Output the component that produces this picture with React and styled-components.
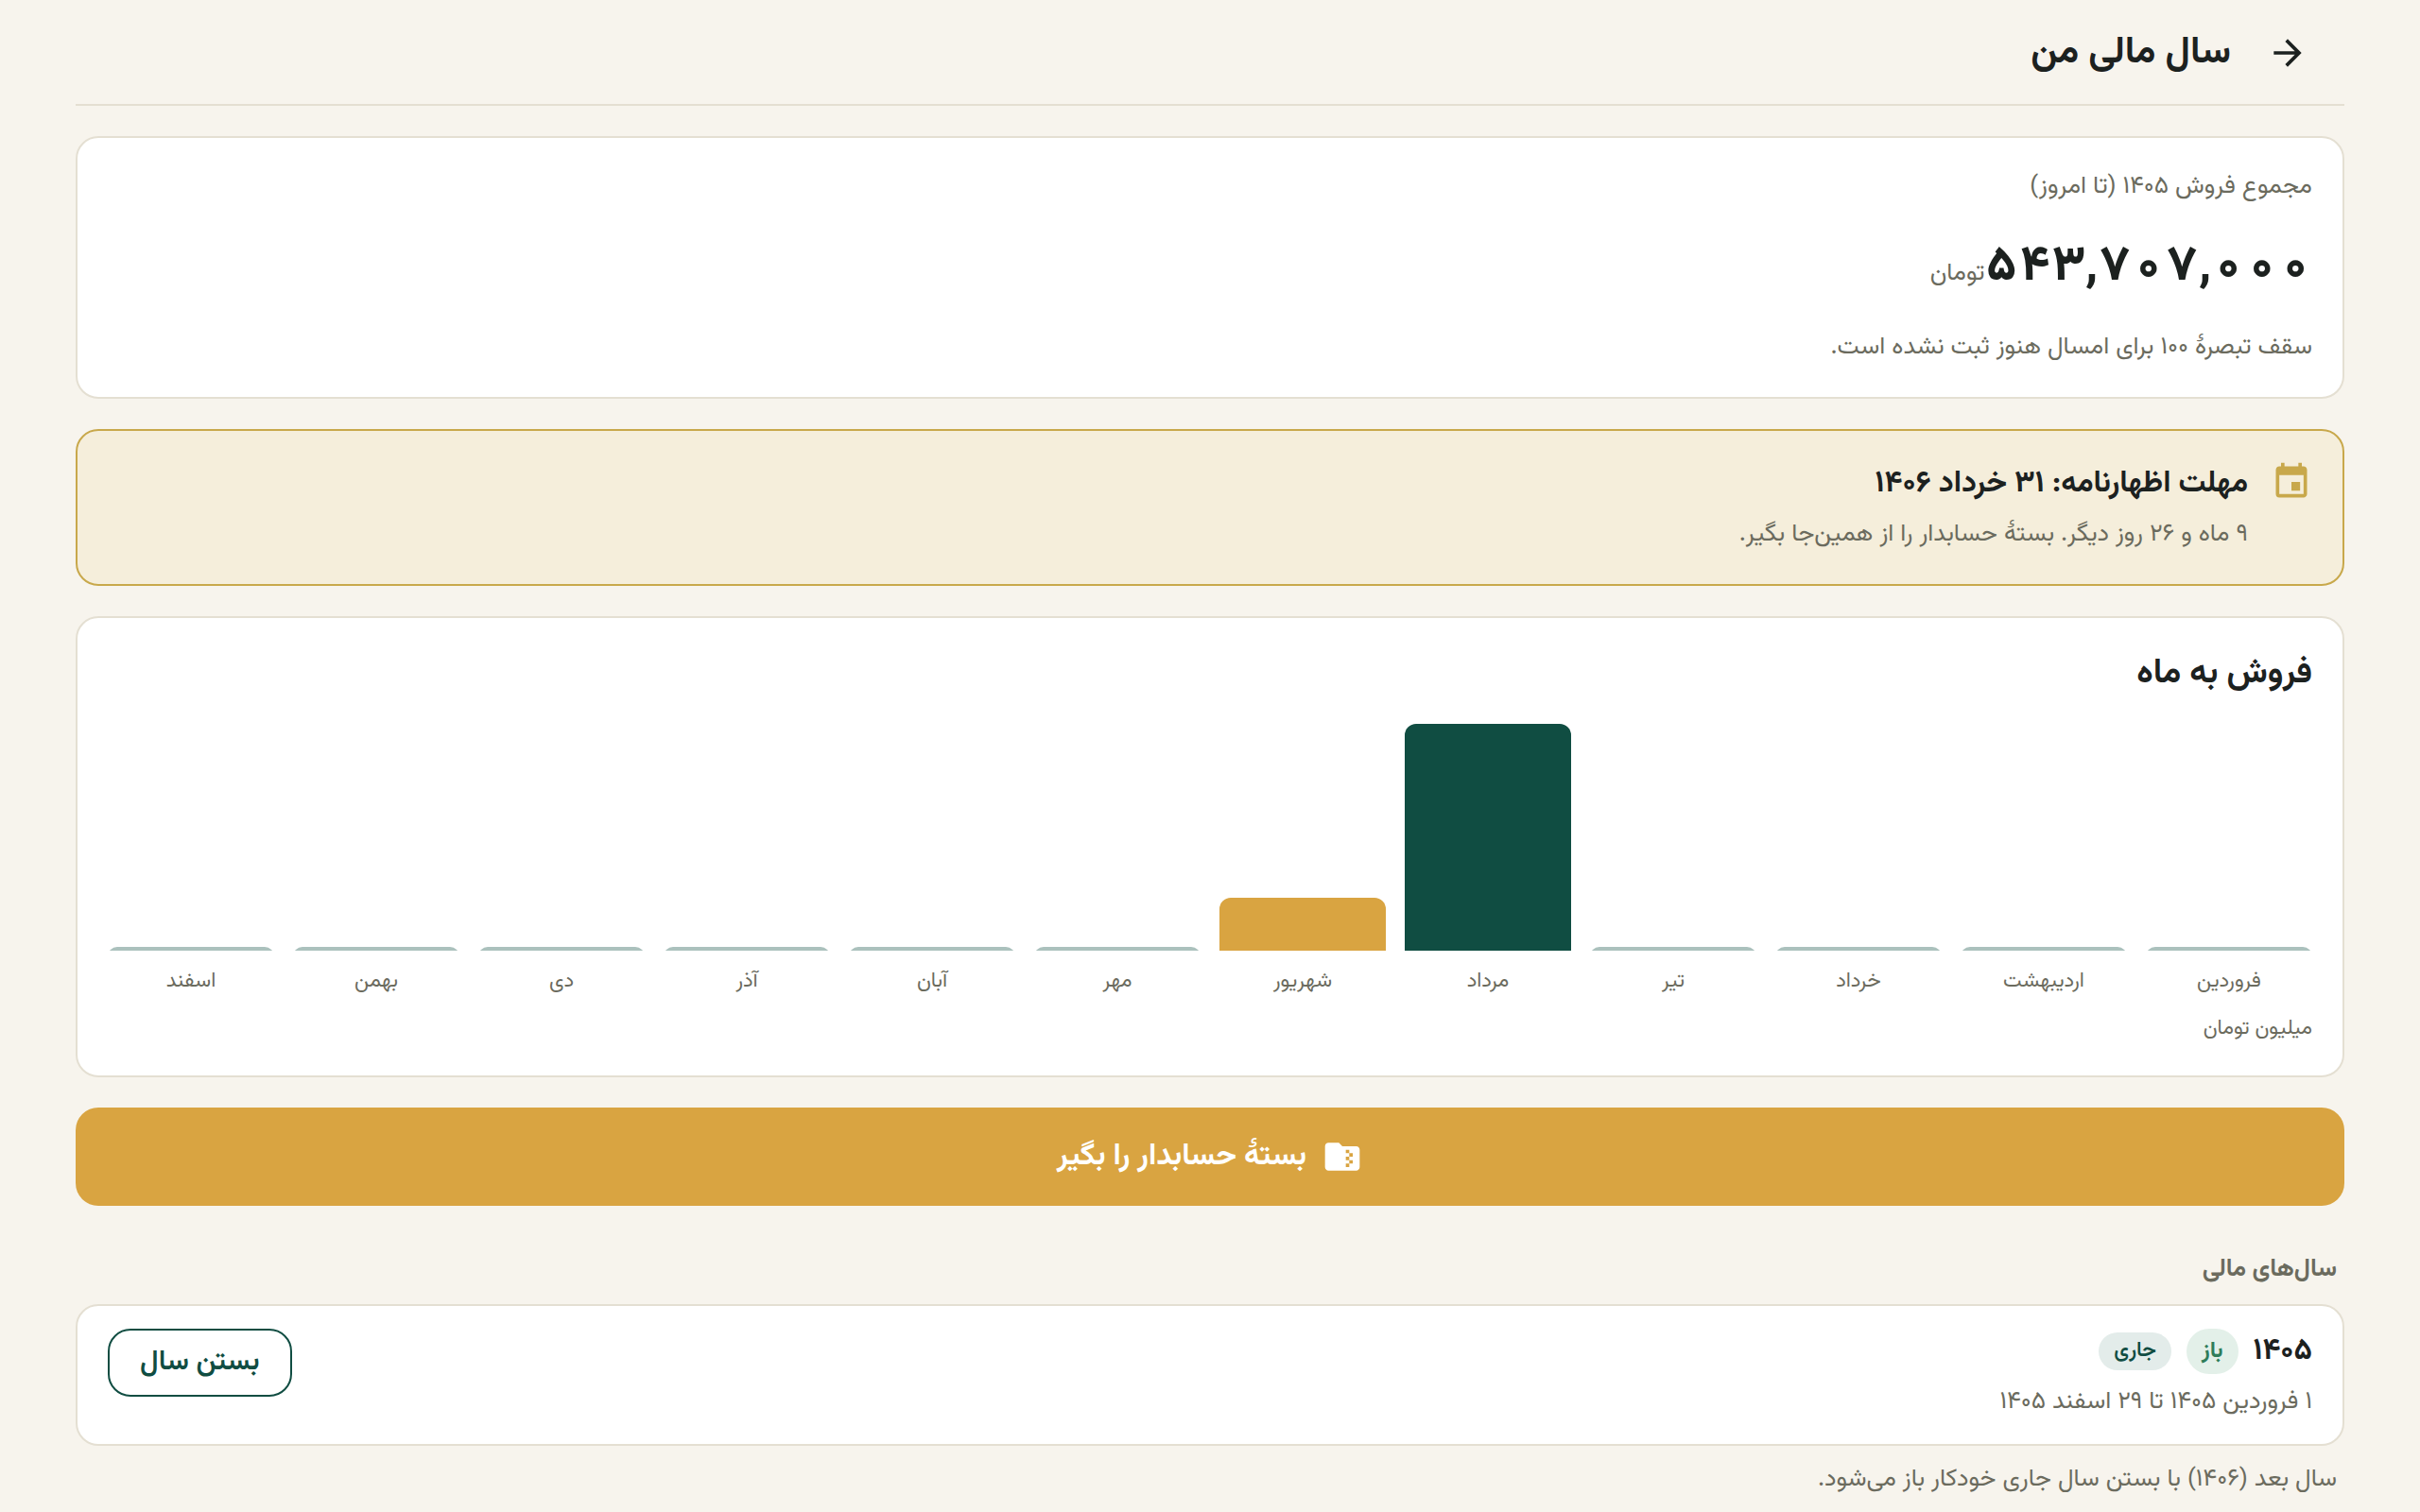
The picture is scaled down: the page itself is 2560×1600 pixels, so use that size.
import React from "react";
import styled, { createGlobalStyle } from "styled-components";
import { MdArrowForward, MdEvent, MdFolderZip } from "react-icons/md";

const GlobalStyle = createGlobalStyle`
  * {
    box-sizing: border-box;
  }

  body {
    margin: 0;
    background-color: #f7f4ed;
    color: #1c211f;
    font-family: "Vazirmatn", "Noto Sans", sans-serif;
    font-size: 26px;
    line-height: 40px;
  }

  h1, h2, h3, p, ul {
    margin: 0;
    padding: 0;
  }

  button {
    font-family: inherit;
    cursor: pointer;
  }
`;

const Page = styled.div`
  padding: 0 80px;
`;

const Header = styled.header`
  display: flex;
  align-items: center;
  gap: 16px;
  height: 112px;
  padding: 2px 16px 0;
  border-bottom: 2px solid #e4dfd2;

  h1 {
    font-size: 40px;
    line-height: 62px;
    font-weight: 700;
  }
`;

const BackButton = styled.button`
  display: flex;
  align-items: center;
  justify-content: center;
  width: 88px;
  height: 88px;
  padding: 0;
  border: none;
  background: none;
  color: inherit;
  font-size: 44px;
`;

const Main = styled.main`
  display: flex;
  flex-direction: column;
  gap: 32px;
  padding: 32px 0;
`;

const Card = styled.section`
  padding: 32px;
  background-color: #fff;
  border: 2px solid #e4dfd2;
  border-radius: 24px;
`;

const Muted = styled.p`
  color: #6b6b5e;
`;

const Total = styled.div`
  display: flex;
  align-items: baseline;
  margin: 24px 0 22px;

  strong {
    font-size: 52px;
    line-height: 84px;
    font-weight: 800;
    font-variant-numeric: tabular-nums;
  }

  span {
    color: #6b6b5e;
  }
`;

const DeadlineCard = styled(Card)`
  display: flex;
  gap: 24px;
  background-color: #f5eedb;
  border-color: #c8a84b;

  svg {
    flex-shrink: 0;
    color: #c8a84b;
    font-size: 44px;
  }
`;

const ItemTitle = styled.h3`
  font-size: 32px;
  line-height: 48px;
  font-weight: 700;
`;

const ItemBody = styled.div`
  display: flex;
  flex-direction: column;
  gap: 10px;
`;

const ChartCard = styled(Card)`
  h2 {
    margin-bottom: 26px;
    font-size: 36px;
    line-height: 54px;
    font-weight: 700;
  }
`;

const Chart = styled.ul`
  display: flex;
  gap: 20px;
  margin-bottom: 16px;
  list-style: none;
`;

const Month = styled.li`
  flex: 1;
  min-width: 0;
`;

const BarArea = styled.div`
  display: flex;
  align-items: flex-end;
  height: 240px;
  margin-bottom: 16px;
`;

const barColors = {
  past: "#104d42",
  current: "#d9a441",
  empty: "#abc1bd",
};

// the fill stays taller than a 4px bar, so its corners keep their curve
const Bar = styled.div`
  width: 100%;
  min-height: 4px;
  overflow: hidden;

  &::before {
    content: "";
    display: block;
    height: 100%;
    min-height: 10px;
    border-radius: 12px 12px 0 0;
    background-color: ${(p) => barColors[p.$kind]};
  }
`;

const Small = styled(Muted)`
  font-size: 22px;
  line-height: 34px;
  text-align: ${(p) => (p.$center ? "center" : "start")};
`;

const PrimaryButton = styled.button`
  display: flex;
  align-items: center;
  justify-content: center;
  gap: 16px;
  width: 100%;
  height: 104px;
  border: none;
  border-radius: 24px;
  background-color: #d9a441;
  color: #fff;
  font-size: 32px;
  line-height: 48px;
  font-weight: 700;

  svg {
    font-size: 44px;
  }
`;

const Years = styled.section`
  display: flex;
  flex-direction: column;
  gap: 16px;
  padding-top: 16px;

  > h2 {
    padding: 0 8px;
    color: #6b6b5e;
    font-size: 26px;
    line-height: 40px;
    font-weight: 700;
  }

  > p {
    padding: 0 8px;
  }
`;

const YearCard = styled(Card)`
  display: flex;
  align-items: flex-start;
  justify-content: space-between;
  padding: 24px 32px;
`;

const YearTitle = styled.div`
  display: flex;
  align-items: center;
  gap: 16px;
`;

const Badge = styled.span`
  padding: 3px 16px;
  border-radius: 24px;
  background-color: #e3ecea;
  color: #104d42;
  font-size: 22px;
  line-height: 34px;
  font-weight: 600;
`;

const OpenBadge = styled(Badge)`
  padding: 6px 16px;
  background-color: #e3f0e9;
  color: #2f7d5b;
  font-size: 24px;
  line-height: 36px;
  font-weight: 700;
`;

const OutlineButton = styled.button`
  height: 72px;
  padding: 0 32px;
  border: 2px solid #104d42;
  border-radius: 24px;
  background: none;
  color: #104d42;
  font-size: 30px;
  line-height: 48px;
  font-weight: 600;
`;

const MAX_SALES = 441;

// sales in million toman
const months = [
  { name: "فروردین", sales: 0 },
  { name: "اردیبهشت", sales: 0 },
  { name: "خرداد", sales: 0 },
  { name: "تیر", sales: 0 },
  { name: "مرداد", sales: 441 },
  { name: "شهریور", sales: 103, current: true },
  { name: "مهر", sales: 0 },
  { name: "آبان", sales: 0 },
  { name: "آذر", sales: 0 },
  { name: "دی", sales: 0 },
  { name: "بهمن", sales: 0 },
  { name: "اسفند", sales: 0 },
];

const barKind = (month) => {
  if (month.sales === 0) return "empty";
  return month.current ? "current" : "past";
};

const SalesChart = () => (
  <ChartCard>
    <h2>فروش به ماه</h2>
    <Chart>
      {months.map((month) => (
        <Month key={month.name}>
          <BarArea>
            <Bar
              $kind={barKind(month)}
              style={{ height: `${(month.sales / MAX_SALES) * 100}%` }}
            />
          </BarArea>
          <Small $center>{month.name}</Small>
        </Month>
      ))}
    </Chart>
    <Small>میلیون تومان</Small>
  </ChartCard>
);

const App = () => (
  <Page dir="rtl" lang="fa">
    <GlobalStyle />
    <Header>
      <BackButton type="button" aria-label="بازگشت">
        <MdArrowForward />
      </BackButton>
      <h1>سال مالی من</h1>
    </Header>
    <Main>
      <Card>
        <Muted>مجموع فروش ۱۴۰۵ (تا امروز)</Muted>
        <Total>
          <strong>۵۴۳,۷۰۷,۰۰۰</strong>
          <span>تومان</span>
        </Total>
        <Muted>سقف تبصرهٔ ۱۰۰ برای امسال هنوز ثبت نشده است.</Muted>
      </Card>
      <DeadlineCard>
        <MdEvent />
        <ItemBody>
          <ItemTitle>مهلت اظهارنامه: ۳۱ خرداد ۱۴۰۶</ItemTitle>
          <Muted>۹ ماه و ۲۶ روز دیگر. بستهٔ حسابدار را از همین‌جا بگیر.</Muted>
        </ItemBody>
      </DeadlineCard>
      <SalesChart />
      <PrimaryButton type="button">
        <MdFolderZip />
        بستهٔ حسابدار را بگیر
      </PrimaryButton>
      <Years>
        <h2>سال‌های مالی</h2>
        <YearCard>
          <ItemBody>
            <YearTitle>
              <ItemTitle>۱۴۰۵</ItemTitle>
              <OpenBadge>باز</OpenBadge>
              <Badge>جاری</Badge>
            </YearTitle>
            <Muted>۱ فروردین ۱۴۰۵ تا ۲۹ اسفند ۱۴۰۵</Muted>
          </ItemBody>
          <OutlineButton type="button">بستن سال</OutlineButton>
        </YearCard>
        <Muted>سال بعد (۱۴۰۶) با بستن سال جاری خودکار باز می‌شود.</Muted>
      </Years>
    </Main>
  </Page>
);

export default App;
